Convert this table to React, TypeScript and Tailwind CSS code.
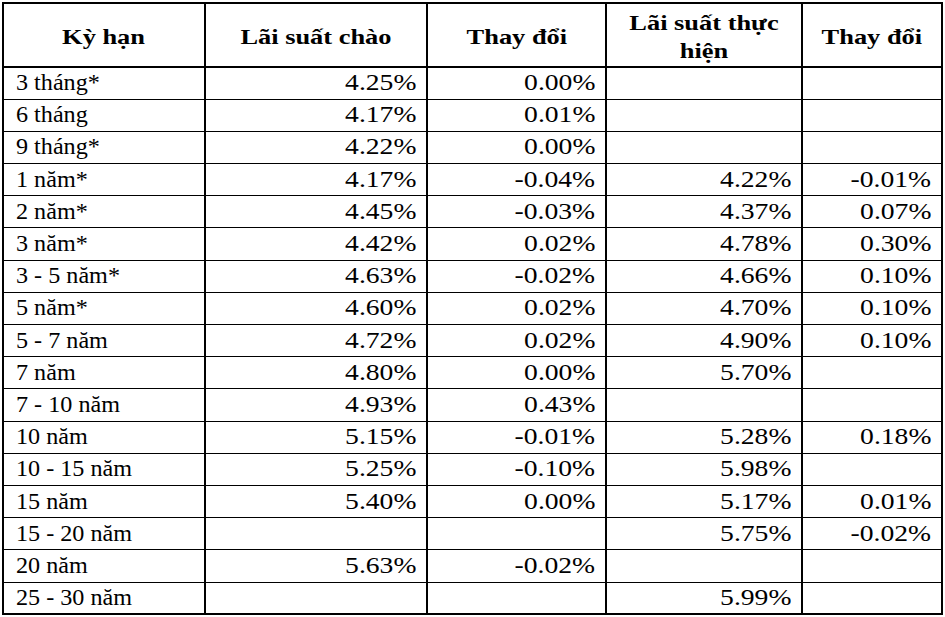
const rows: string[][] = [
  ['3 tháng*', '4.25%', '0.00%', '', ''],
  ['6 tháng', '4.17%', '0.01%', '', ''],
  ['9 tháng*', '4.22%', '0.00%', '', ''],
  ['1 năm*', '4.17%', '-0.04%', '4.22%', '-0.01%'],
  ['2 năm*', '4.45%', '-0.03%', '4.37%', '0.07%'],
  ['3 năm*', '4.42%', '0.02%', '4.78%', '0.30%'],
  ['3 - 5 năm*', '4.63%', '-0.02%', '4.66%', '0.10%'],
  ['5 năm*', '4.60%', '0.02%', '4.70%', '0.10%'],
  ['5 - 7 năm', '4.72%', '0.02%', '4.90%', '0.10%'],
  ['7 năm', '4.80%', '0.00%', '5.70%', ''],
  ['7 - 10 năm', '4.93%', '0.43%', '', ''],
  ['10 năm', '5.15%', '-0.01%', '5.28%', '0.18%'],
  ['10 - 15 năm', '5.25%', '-0.10%', '5.98%', ''],
  ['15 năm', '5.40%', '0.00%', '5.17%', '0.01%'],
  ['15 - 20 năm', '', '', '5.75%', '-0.02%'],
  ['20 năm', '5.63%', '-0.02%', '', ''],
  ['25 - 30 năm', '', '', '5.99%', ''],
];

const headers = ['Kỳ hạn', 'Lãi suất chào', 'Thay đổi', 'Lãi suất thực hiện', 'Thay đổi'];

export default function App() {
  return (
    <div className="bg-white w-[945px] h-[617px] pt-[2px] pl-[2px] font-['Liberation_Serif'] text-black">
      <table className="border-collapse border-2 border-black table-fixed w-[941px] font-['Liberation_Serif']">
        <colgroup>
          <col className="w-[202px]" />
          <col className="w-[222px]" />
          <col className="w-[179px]" />
          <col className="w-[196px]" />
          <col className="w-[140px]" />
        </colgroup>
        <thead>
          <tr className="h-[64px]">
            {headers.map((h, i) => (
              <th
                key={i}
                className="border-x-2 border-b-2 border-black px-2 pt-[3px] text-center align-middle font-bold text-[22px] leading-[28px]"
              >
                <span className={`inline-block scale-x-[1.2] origin-center ${i === 3 ? 'w-[140px]' : ''}`}>{h}</span>
              </th>
            ))}
          </tr>
        </thead>
        <tbody>
          {rows.map((r, ri) => (
            <tr key={ri} className="h-[32.2px]">
              {r.map((c, ci) => (
                <td
                  key={ci}
                  className={`border-x-2 border-y border-black align-middle text-[23px] leading-[26px] ${
                    ci === 0 ? 'pl-[12px] text-left' : 'pr-[10px] text-right'
                  }`}
                >
                  <span
                    className={`inline-block ${
                      ci === 0 ? 'scale-x-[1.05] origin-left' : 'scale-x-[1.2] origin-right'
                    }`}
                  >
                    {c}
                  </span>
                </td>
              ))}
            </tr>
          ))}
        </tbody>
      </table>
    </div>
  );
}
